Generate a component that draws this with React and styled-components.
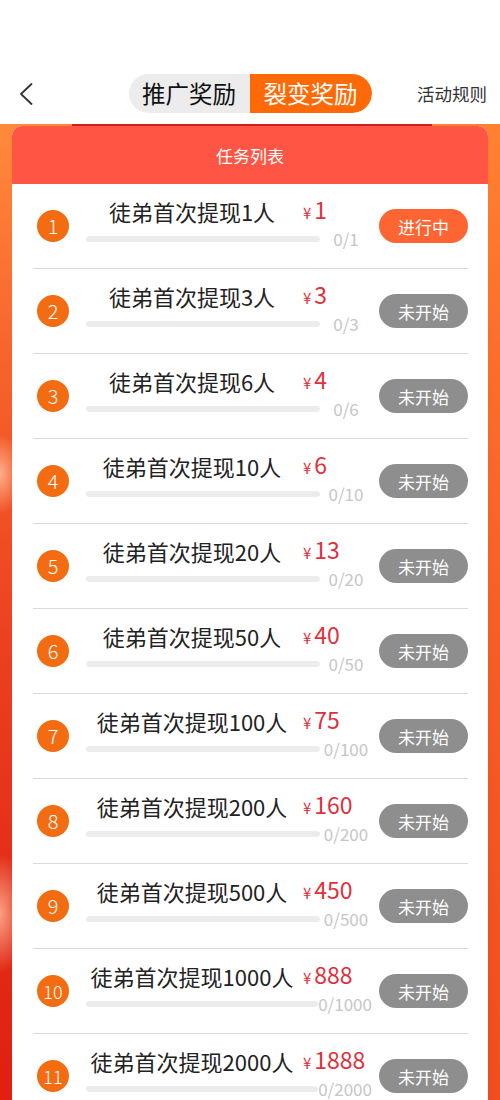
import React from "react";
import styled, { createGlobalStyle } from "styled-components";

const Global = createGlobalStyle`
  html, body { margin: 0; padding: 0; background: #fff; }
  body { font-family: "Noto Sans CJK SC", "Noto Sans", sans-serif; }
  * { box-sizing: border-box; }
`;

const Page = styled.div`
  width: 500px;
  min-height: 1100px;
  background: #fff;
`;

const TopBar = styled.header`
  height: 124px;
  padding-top: 74px;
  background: #fff;
`;

const NavRow = styled.div`
  display: grid;
  grid-template-columns: 1fr auto 1fr;
  align-items: center;
  height: 39px;
`;

const BackButton = styled.button`
  justify-self: start;
  margin-left: 19px;
  padding: 0;
  border: 0;
  background: none;
  display: flex;
  align-items: center;
  cursor: pointer;
`;

const Tabs = styled.div`
  display: flex;
  height: 39px;
  border-radius: 20px;
  overflow: hidden;
  background: #ececec;
`;

const Tab = styled.div`
  width: ${(p) => (p.$first ? "121px" : "122px")};
  display: flex;
  align-items: center;
  justify-content: center;
  font-size: 23.5px;
  line-height: 1;
  color: ${(p) => (p.$active ? "#fff" : "#111")};
  background: ${(p) => (p.$active ? "#ff6a06" : "transparent")};
  border-radius: ${(p) => (p.$active ? "0 20px 20px 0" : "0")};
`;

const Rules = styled.div`
  justify-self: end;
  margin-right: 13px;
  font-size: 17.5px;
  color: #333;
  line-height: 1;
`;

const Content = styled.main`
  padding: 0 12px 0;
  background:
    radial-gradient(ellipse 22px 40px at 0px 350px, rgba(255, 205, 170, 0.75), rgba(255, 205, 170, 0) 100%),
    radial-gradient(ellipse 26px 60px at 0px 790px, rgba(255, 190, 160, 0.8), rgba(255, 190, 160, 0) 100%),
    linear-gradient(90deg, rgba(0,0,0,0) 80%, rgba(255, 120, 40, 0.55) 100%),
    linear-gradient(180deg, #ff8a3a 0px, #f8652c 220px, #ec4020 520px, #e22a16 800px, #e01e10 1000px);
`;

const TopLine = styled.div`
  width: 360px;
  height: 2px;
  margin: 0 0 0 60px;
  background: #d41e1e;
`;

const Card = styled.section`
  border-radius: 10px 10px 0 0;
  overflow: hidden;
  background: #fff;
`;

const CardHeader = styled.div`
  height: 58px;
  display: flex;
  align-items: center;
  justify-content: center;
  background: #ff5544;
  color: #fff;
  font-size: 17px;
`;

const List = styled.div`
  background: #fff;
`;

const Row = styled.div`
  margin: 0 20px 0 21px;
  height: 85px;
  display: flex;
  align-items: center;
  border-bottom: 1px solid #dadada;
`;

const Index = styled.div`
  width: 32px;
  height: 32px;
  flex: none;
  margin-left: 4px;
  margin-right: 17px;
  border-radius: 50%;
  background: #f46c12;
  color: #fff;
  font-size: ${(p) => (p.$wide ? "18px" : "20px")};
  font-family: "Noto Sans CJK SC", sans-serif;
  font-weight: 300;
  display: flex;
  align-items: center;
  justify-content: center;
  line-height: 1;
`;

const Middle = styled.div`
  width: 286px;
  flex: none;
  align-self: stretch;
  padding-top: 12px;
  display: flex;
  flex-direction: column;
`;

const TitleLine = styled.div`
  display: flex;
  align-items: center;
  height: 30px;
`;

const Title = styled.div`
  width: 212px;
  flex: none;
  text-align: center;
  white-space: nowrap;
  font-size: 22px;
  color: #222;
  line-height: 30px;
`;

const Price = styled.div`
  margin-left: 5px;
  color: #e0303c;
  font-size: 23px;
  line-height: 30px;
  white-space: nowrap;
`;

const Yen = styled.span`
  font-size: 15px;
  margin-right: 3px;
`;

const BottomLine = styled.div`
  display: flex;
  align-items: center;
  height: 22px;
  margin-top: 2px;
`;

const Bar = styled.div`
  flex: 0 1 234px;
  min-width: 0;
  height: 6px;
  border-radius: 3px;
  background: #ececec;
`;

const Count = styled.div`
  flex: 1 0 auto;
  text-align: center;
  font-size: 17px;
  line-height: 22px;
  color: #c6c6c6;
  white-space: nowrap;
`;

const StatusButton = styled.button`
  margin-left: auto;
  width: 89px;
  height: 34px;
  flex: none;
  border: 0;
  border-radius: 17px;
  background: ${(p) => (p.$active ? "#ff6433" : "#8e8e8e")};
  color: #fff;
  font-family: "Noto Sans CJK SC", sans-serif;
  font-size: 17px;
  padding: 0;
  line-height: 1;
`;

const tasks = [
  [1, 1],
  [3, 3],
  [6, 4],
  [10, 6],
  [20, 13],
  [50, 40],
  [100, 75],
  [200, 160],
  [500, 450],
  [1000, 888],
  [2000, 1888],
];

export default function App() {
  return (
    <Page>
      <Global />
      <TopBar>
        <NavRow>
          <BackButton aria-label="返回">
            <svg width="14" height="22" viewBox="0 0 14 22">
              <polyline points="12.5,1 2,11 12.5,21" fill="none" stroke="#333" strokeWidth="1.8" strokeLinecap="round" strokeLinejoin="round" />
            </svg>
          </BackButton>
          <Tabs>
            <Tab $first>推广奖励</Tab>
            <Tab $active>裂变奖励</Tab>
          </Tabs>
          <Rules>活动规则</Rules>
        </NavRow>
      </TopBar>
      <Content>
        <TopLine />
        <Card>
          <CardHeader>任务列表</CardHeader>
          <List>
            {tasks.map(([n, money], i) => (
              <Row key={n}>
                <Index $wide={i >= 9}>{i + 1}</Index>
                <Middle>
                  <TitleLine>
                    <Title>徒弟首次提现{n}人</Title>
                    <Price>
                      <Yen>¥</Yen>
                      {money}
                    </Price>
                  </TitleLine>
                  <BottomLine>
                    <Bar />
                    <Count>0/{n}</Count>
                  </BottomLine>
                </Middle>
                <StatusButton $active={i === 0}>{i === 0 ? "进行中" : "未开始"}</StatusButton>
              </Row>
            ))}
          </List>
        </Card>
      </Content>
    </Page>
  );
}
